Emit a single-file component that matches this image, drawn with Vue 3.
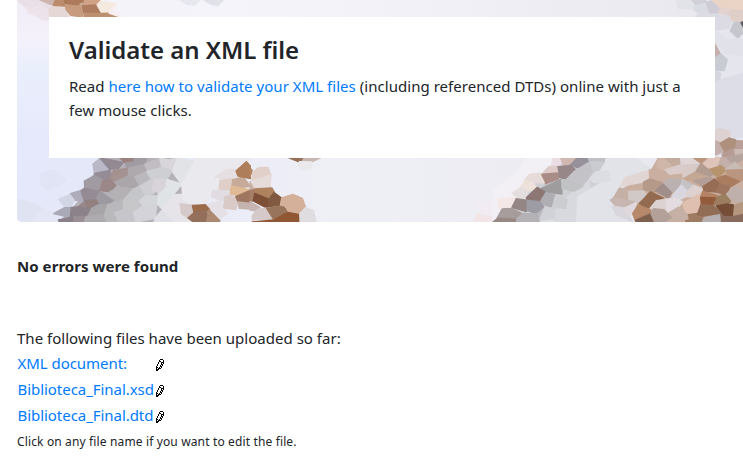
<script setup>
const files = ['XML document:', 'Biblioteca_Final.xsd', 'Biblioteca_Final.dtd']

// Mosaic tiles of the banner, grouped by the area they cover. Each area is drawn at a third of its tile units.
const areas = [
  { x: 0, y: 0, tiles: [
    ['#e9e0e7', '51,0 120,0 148,8 158,22 145,32 120,17 98,26 80,24'],
    ['#ede3eb', '98,26 120,17 147,34 147,60 125,58 110,48 84,38 80,24'],
    ['#e5d7d5', '147,28 158,18 198,26 206,51 150,51'],
    ['#cdb5ad', '120,0 166,0 164,15 148,12'],
    ['#bb8b6c', '166,0 194,0 198,19 160,16'],
    ['#c69b7e', '194,10 240,12 251,25 246,51 212,46 198,28'],
    ['#ad7a5c', '194,0 254,0 253,9 228,14 194,10'],
    ['#c9aa92', '240,12 253,9 257,18 248,24'],
    ['#ae7d61', '247,17 290,10 306,41 252,40'],
    ['#d0a287', '253,0 300,0 292,11 255,13'],
    ['#f5eae0', '302,4 348,10 327,40 306,41 291,14'],
    ['#bd906f', '252,40 306,40 340,39 360,51 252,51'],
    ['#f8eff2', '340,20 362,51 338,43 327,39'],
    ['#e7e8ef', '540,0 600,0 584,15 560,13'],
    ['#e1e2e9', '610,0 670,0 653,17 632,12']
  ]},
  { x: 372, y: 0, tiles: [
    ['#e2e3e9', '914,0 960,0 968,15 965,27 918,24'],
    ['#d2cfd8', '960,0 1001,0 1002,9 974,18'],
    ['#dadce3', '968,18 1003,10 1008,37 980,41 966,29'],
    ['#dcdce2', '980,41 1008,37 1029,42 1029,51 970,51'],
    ['#cecbd4', '1002,7 1026,0 1046,22 1038,40 1013,38'],
    ['#ead4c6', '1020,0 1113,0 1113,32 1075,28 1044,22'],
    ['#e4d2ce', '1046,22 1077,28 1069,45 1040,38'],
    ['#dfcfc8', '1077,30 1113,33 1113,64 1077,65 1069,45'],
    ['#dcdbe4', '1029,42 1069,47 1080,66 1068,86 1029,90'],
    ['#c5c7cd', '1075,92 1086,68 1105,67 1113,79 1113,99 1097,114'],
    ['#67636c', '1107,68 1113,65 1113,80']
  ]},
  { x: 703, y: 0, tiles: [
    ['#e0e1e9', '36,92 70,120 120,115 120,165 70,163 36,130'],
    ['#c5b1ad', '36,132 53,164 36,171'],
    ['#c9cbd3', '36,174 54,162 73,179 64,211 36,212'],
    ['#d5d6de', '36,212 52,219 50,247 36,252'],
    ['#dcdde6', '36,252 50,240 120,220 120,410 90,415 82,393 36,385'],
    ['#ddd1d2', '36,390 53,387 82,393 80,412 52,428 36,424'],
    ['#c4afac', '36,422 51,428 64,454 36,466'],
    ['#b99f98', '98,422 120,423 120,450 93,457 95,440'],
    ['#b69c94', '65,454 93,441 105,471 65,479 57,465'],
    ['#cbbab6', '95,450 120,448 120,480 100,475'],
    ['#ae907d', '51,430 78,414 98,420 95,440 65,454']
  ]},
  { x: 0, y: 140, tiles: [
    ['#e0e4f5', '122,102 160,90 196,121 180,137 138,148 124,130'],
    ['#dfe3f2', '51,177 95,190 131,206 121,226 96,246 64,246 51,240'],
    ['#e4e6f5', '131,206 176,220 176,246 96,246'],
    ['#b5b0b8', '299,55 520,54 580,100 500,246 180,246 240,180 284,100'],
    ['#bab7c6', '300,55 329,88 283,100 279,72'],
    ['#928993', '300,54 370,67 355,85 329,88'],
    ['#9c8180', '360,54 406,54 404,67 375,69'],
    ['#a09ca1', '375,69 405,66 401,54 440,54 434,75 382,86'],
    ['#ada9ac', '382,86 435,72 440,94 404,110 380,109'],
    ['#c1bdc2', '434,73 479,54 486,81 445,95'],
    ['#d8d6da', '479,54 507,60 533,54 516,93 486,82'],
    ['#e2e3e6', '533,54 590,66 583,105 545,134 516,93'],
    ['#958c96', '284,100 330,91 340,122 298,121'],
    ['#a49190', '340,91 382,85 380,112 345,123 332,119'],
    ['#aaa6aa', '382,109 404,112 420,138 370,145 346,125'],
    ['#bab8bc', '404,110 440,95 454,118 420,138'],
    ['#cecfd2', '440,94 486,82 516,93 500,120 454,118'],
    ['#a09ba2', '253,123 283,107 309,120 299,154 254,145'],
    ['#9b8688', '309,121 333,120 348,136 330,155 299,152'],
    ['#b4b1b4', '330,154 370,142 399,148 382,179 349,185'],
    ['#c5c6ca', '400,147 419,138 437,166 418,185 372,179'],
    ['#cfcfd3', '420,138 454,118 469,146 462,160 437,166'],
    ['#e1e4e6', '500,118 545,132 521,164 477,160 495,138'],
    ['#d8d3da', '462,120 493,117 495,139 477,159 457,149'],
    ['#aeacbb', '211,161 243,151 253,184 222,181'],
    ['#958b94', '253,145 298,154 287,180 253,183 243,152'],
    ['#9d9aa1', '287,178 300,155 340,182 321,195 296,193'],
    ['#d2d5e4', '176,178 210,164 223,181 213,200 190,195'],
    ['#95878a', '233,202 255,184 267,207'],
    ['#938180', '255,183 288,179 296,194 267,208'],
    ['#a8a5a9', '296,194 323,195 312,224 261,230 270,208'],
    ['#b9b8bc', '323,194 370,180 370,209 342,218'],
    ['#c7c7ca', '370,180 418,184 425,199 400,218 371,209'],
    ['#d3d5d8', '418,183 437,166 474,168 473,192 433,201'],
    ['#e0e3e6', '475,161 521,165 520,205 487,208 473,193'],
    ['#aaa9b7', '161,221 195,202 214,203 211,233'],
    ['#8c8289', '214,202 233,201 270,207 258,230 211,231'],
    ['#89818a', '175,240 222,230 222,246 178,246'],
    ['#9a8f94', '222,230 258,231 253,246 222,246'],
    ['#adabaf', '258,230 313,224 321,246 253,246'],
    ['#b9b8bb', '313,224 323,196 343,218 357,246 321,246'],
    ['#c6c6ca', '343,218 370,210 400,219 408,246 357,246'],
    ['#d4d3d9', '400,218 425,200 470,194 466,235 408,246'],
    ['#dfdfe6', '466,234 488,208 520,205 530,246 462,246'],
    ['#e6e4e9', '488,208 521,165 577,160 600,198 565,246 525,246'],
    ['#e9e9ee', '590,54 750,54 720,140 650,160 600,200 550,180 545,134'],
    ['#d5cac9', '540,191 577,196 580,227 564,234 545,221'],
    ['#9b6b4c', '577,196 621,194 630,207 609,222 582,218'],
    ['#94705c', '580,220 620,210 625,246 580,246 564,234'],
    ['#ad8972', '627,209 660,242 655,246 620,246'],
    ['#e5e0e5', '620,193 660,183 682,222 659,236'],
    ['#e6dfe2', '646,111 680,88 709,88 710,116 686,122'],
    ['#e0cfc8', '660,121 696,117 692,151 657,149'],
    ['#c7aa99', '698,119 730,111 751,139 720,143 696,137'],
    ['#e0b997', '695,138 751,150 714,167 690,162'],
    ['#e1dce2', '638,151 683,153 683,164 665,183 634,171'],
    ['#d9cac8', '674,171 692,164 714,184 707,209 671,204'],
    ['#9e765f', '707,170 751,151 751,189 714,184'],
    ['#c5b3ad', '714,186 751,190 751,207 718,205'],
    ['#ae7d5a', '708,93 739,65 751,78 751,116 714,108']
  ]},
  { x: 250, y: 140, tiles: [
    ['#977158', '117,54 162,54 158,61 145,65'],
    ['#c8b7b2', '162,54 211,54 185,66 158,62'],
    ['#eaeaed', '148,65 185,66 185,82 165,91 145,81'],
    ['#b58564', '0,82 8,95 0,107'],
    ['#e1d0c9', '8,96 27,83 54,82 63,107 6,123'],
    ['#e5dbd8', '6,123 63,105 60,145 10,148'],
    ['#c8b0a6', '0,125 12,149 0,151'],
    ['#a67f67', '0,151 14,149 14,180 0,185'],
    ['#ae815f', '14,147 66,144 73,156 54,174 14,160'],
    ['#7e4f37', '14,160 56,177 52,205 10,183'],
    ['#805940', '56,178 72,158 95,174 91,196 55,200'],
    ['#c6b5b3', '0,185 30,202 20,213 0,210'],
    ['#d5c9ca', '20,210 49,204 71,238 7,240 7,228'],
    ['#97745b', '50,205 100,197 114,217 72,240'],
    ['#d4b09b', '95,174 129,163 157,175 167,203 147,223 115,216 107,198 91,195'],
    ['#915735', '72,240 113,217 145,223 151,246 7,246'],
    ['#e0dde1', '150,220 166,203 190,211 198,246 150,246'],
    ['#f2ebf3', '678,189 735,181 750,194 750,216 730,225 690,215'],
    ['#f2e5e8', '670,246 682,222 722,230 736,246'],
    ['#938b93', '740,230 750,215 750,246 736,246']
  ]},
  { x: 493, y: 140, tiles: [
    ['#f2eff5', '0,150 70,100 100,54 180,54 185,80 100,125 70,200 0,246'],
    ['#cfd0d5', '200,54 335,54 390,90 290,170 260,210 220,246 12,246 110,150'],
    ['#dddfe4', '185,204 260,190 285,246 139,246 184,236'],
    ['#d8d9df', '222,170 290,120 290,246 185,246 184,205 219,205'],
    ['#e2e3e9', '330,54 430,54 500,110 400,200 420,246 250,246 255,170 330,125 352,121 345,92 317,93 333,67'],
    ['#e9dde3', '179,54 207,54 200,78 177,77'],
    ['#d2b6b0', '203,54 251,54 241,72 212,75'],
    ['#97919b', '233,75 252,54 286,54 289,65 264,88'],
    ['#bec0c4', '286,54 335,54 333,66 290,65'],
    ['#c9cbd0', '290,65 333,67 317,93 298,96'],
    ['#978788', '194,80 233,76 249,91 218,118 198,111'],
    ['#dccbc8', '149,100 168,79 190,80 194,99'],
    ['#a88c85', '142,103 193,99 197,117 157,132'],
    ['#e6dbd8', '96,118 110,103 140,99 154,129 115,126'],
    ['#ede1da', '82,143 97,120 117,128 132,143 106,154'],
    ['#c4c3c7', '245,93 289,66 298,98 266,139 221,118'],
    ['#9f9c9d', '145,145 206,117 207,162 157,156'],
    ['#c1c2c4', '206,119 222,119 269,140 242,154 207,145'],
    ['#e4dedf', '58,159 83,143 105,155 95,178 70,171'],
    ['#8d7774', '100,173 133,142 157,157 142,188 103,180'],
    ['#afafb3', '141,187 159,157 187,166 174,202'],
    ['#cccdd1', '187,168 222,179 219,205 179,202'],
    ['#f3e8e6', '14,180 70,171 60,201 17,204'],
    ['#958686', '57,202 70,176 104,181 100,215'],
    ['#9d9ba4', '103,181 141,185 154,202 132,222 102,211'],
    ['#b8b8bd', '132,223 156,202 139,240'],
    ['#d1d2d7', '139,239 156,202 185,205 184,236'],
    ['#a69c9b', '12,235 27,207 57,205 90,223 68,239'],
    ['#b4b2b5', '68,239 89,221 132,221 139,246 66,246'],
    ['#988883', '0,246 14,235 68,238 66,246'],
    ['#dcdce3', '290,117 309,95 345,92 352,121 304,128'],
    ['#c9afa0', '496,54 750,54 750,246 430,246 420,210 362,190 385,150 470,100'],
    ['#cfb6a8', '491,87 496,61 504,54 531,54 540,75 507,90'],
    ['#c3ab9e', '516,54 559,54 561,76 540,76'],
    ['#dfd6d8', '563,54 602,54 622,70 600,77 565,75'],
    ['#bd957e', '602,54 640,54 624,70'],
    ['#dfc5b9', '628,75 647,56 681,54 692,65 661,89'],
    ['#c4afa9', '685,54 703,54 722,77 696,88 676,78'],
    ['#b5a49e', '703,54 750,42 750,57 722,75'],
    ['#e1d6d3', '382,139 398,112 469,91 466,115 451,126'],
    ['#caaea0', '469,90 490,87 530,98 510,127 470,117'],
    ['#d9ccca', '516,89 563,75 574,76 570,98 530,103'],
    ['#d8cac6', '572,76 622,72 603,98 570,113 569,98'],
    ['#b29b91', '606,99 624,70 660,102 649,111'],
    ['#b6946e', '650,88 684,77 700,89 674,113'],
    ['#c8bab5', '697,88 726,67 750,89 720,92'],
    ['#c09c83', '699,91 750,90 750,120 703,109'],
    ['#c5a893', '567,119 605,97 649,112 614,122'],
    ['#b49f98', '601,122 649,112 663,117 630,139'],
    ['#b59a8a', '451,127 469,117 510,129 488,155 452,150'],
    ['#bbb1b0', '510,130 527,116 567,121 563,140 536,157'],
    ['#c6c3c7', '563,140 567,118 601,137 581,154'],
    ['#a08e8a', '488,153 510,132 536,158 526,174'],
    ['#c5b0a6', '361,175 379,144 407,153 407,181'],
    ['#d1c9c7', '407,154 453,153 459,166 445,187 408,181'],
    ['#936b50', '445,184 472,155 511,174 483,185 469,207 438,191'],
    ['#d9d6df', '537,168 565,135 582,154 577,171 554,181'],
    ['#ded2d1', '582,155 602,136 628,146 623,172 580,170'],
    ['#976d55', '630,140 665,117 684,132 681,157 633,153'],
    ['#aa7d61', '672,115 696,106 740,124 715,139 684,132'],
    ['#ba957f', '700,91 750,90 750,123 713,109'],
    ['#9e7660', '681,133 711,141 698,167 670,155'],
    ['#c0b0ab', '699,164 724,139 750,149 750,190 716,180'],
    ['#c8b7b1', '352,180 361,174 408,182 429,186 394,204 366,196'],
    ['#d9d5dc', '357,199 394,203 419,245 370,224'],
    ['#e0d8dc', '394,204 431,187 420,224 402,224'],
    ['#b5896a', '419,221 435,196 471,208 474,221 427,242'],
    ['#7e604f', '428,241 474,221 483,246 429,246'],
    ['#dcd2d2', '471,205 490,182 519,178 522,204 512,210'],
    ['#e3dbe0', '519,178 543,173 568,185 554,206 522,222'],
    ['#dfbfaf', '568,190 620,162 624,191 610,224 582,225'],
    ['#9f7b62', '580,225 613,220 634,229 629,246 578,246'],
    ['#c5b0a6', '522,222 557,201 582,224 585,237 550,240 535,232'],
    ['#b3a199', '474,221 482,206 512,209 535,232 516,246 485,246'],
    ['#b38264', '629,154 672,166 664,177 623,171'],
    ['#935b3b', '623,172 672,174 662,194 625,193'],
    ['#9a7e5e', '663,194 673,170 697,164 713,184 701,195'],
    ['#926d56', '624,193 661,197 690,225 651,231 613,224'],
    ['#b6b0b2', '634,232 680,224 688,246 628,246'],
    ['#886b5c', '684,226 750,217 750,246 686,246'],
    ['#b59780', '720,198 750,187 750,219 719,226'],
    ['#764d37', '670,198 704,192 721,195 718,226 693,225']
  ]}
]
</script>

<template>
  <main class="page">
    <section class="banner">
      <svg class="mosaic" viewBox="17 0 726 222" preserveAspectRatio="none" aria-hidden="true">
        <defs>
          <linearGradient id="base" x1="0" x2="1" y1="0" y2="0">
            <stop offset="0" stop-color="#e4e8fa" />
            <stop offset=".15" stop-color="#e4e8f8" />
            <stop offset=".42" stop-color="#efeff6" />
            <stop offset=".75" stop-color="#ececf2" />
            <stop offset="1" stop-color="#e4e5ed" />
          </linearGradient>
          <linearGradient id="top" x1="0" x2="1" y1="0" y2="0">
            <stop offset="0" stop-color="#f5f3fb" />
            <stop offset=".3" stop-color="#f4f4fa" />
            <stop offset=".6" stop-color="#f0f0f6" />
            <stop offset="1" stop-color="#e7e7ed" />
          </linearGradient>
          <linearGradient id="edge" x1="0" x2="0" y1="0" y2="1">
            <stop offset="0" stop-color="#f0edf6" />
            <stop offset=".2" stop-color="#f5f1fb" />
            <stop offset=".35" stop-color="#eaeffc" />
            <stop offset=".7" stop-color="#e6e9fb" />
            <stop offset="1" stop-color="#e4e8fa" />
          </linearGradient>
        </defs>
        <rect x="17" width="726" height="222" fill="url(#base)" />
        <rect x="17" width="726" height="20" fill="url(#top)" />
        <rect x="17" width="32" height="190" fill="url(#edge)" />
        <g v-for="(a, i) in areas" :key="i" :transform="`translate(${a.x} ${a.y}) scale(.333333)`">
          <polygon v-for="(t, j) in a.tiles" :key="j" :points="t[1]" :fill="t[0]" :stroke="t[0]" stroke-width="4" stroke-linejoin="round" />
        </g>
      </svg>
      <div class="card">
        <h1>Validate an XML file</h1>
        <p>Read <a>here how to validate your XML files</a> (including referenced DTDs) online with just a<br>few mouse clicks.</p>
      </div>
    </section>

    <p class="status">No errors were found</p>
    <p class="intro">The following files have been uploaded so far:</p>
    <ul class="files">
      <li v-for="f in files" :key="f">
        <a class="name">{{ f }}</a>
        <svg class="pencil" viewBox="0 0 8 12" shape-rendering="crispEdges" aria-hidden="true">
          <path d="M4 0h3v1h-3zM3 1h1v2h-1zM7 1h1v4h-1zM4 2h1v1h-1zM2 3h1v2h-1zM5 3h2v1h-2zM5 4h1v2h-1zM1 5h1v2h-1zM6 5h1v2h-1zM4 6h1v2h-1zM0 7h1v5h-1zM5 7h1v2h-1zM1 8h1v1h-1zM3 8h1v2h-1zM4 9h1v1h-1zM2 9h1v2h-1zM1 10h1v2h-1z" />
        </svg>
      </li>
    </ul>
    <p class="hint">Click on any file name if you want to edit the file.</p>
  </main>
</template>

<style>
body { background: #fff; overflow: hidden; }
</style>

<style scoped>
.page {
  padding-left: 17px;
  height: 467px;
  box-sizing: border-box;
  color: #212529;
  font: 15px/24px "Noto Sans", "Open Sans", sans-serif;
}
.banner {
  display: grid;
  height: 222px;
  border-bottom-left-radius: 5px;
  overflow: hidden;
}
.mosaic { grid-area: 1 / 1; width: 726px; height: 222px; display: block; }
.card {
  grid-area: 1 / 1;
  z-index: 1;
  box-sizing: border-box;
  width: 666px;
  height: 141px;
  margin: 17px 0 0 32px;
  padding: 18px 20px;
  background: #fff;
  white-space: nowrap;
  letter-spacing: .035px;
}
h1, p, ul { margin: 0; padding: 0; }
h1 {
  font: 600 24px/29px "Noto Sans", "Open Sans", sans-serif;
  letter-spacing: -.02px;
  margin-bottom: 10px;
}
a { color: #007bff; text-decoration: none; }
.status { margin-top: 32px; font-weight: 700; letter-spacing: .05px; }
.intro { margin-top: 48px; letter-spacing: .02px; }
.files { list-style: none; padding: 1px 0 0; }
.files li { display: flex; height: 26px; line-height: 24px; }
.name { width: 139px; padding-left: .5px; box-sizing: border-box; white-space: nowrap; letter-spacing: -.05px; }
.pencil { width: 8px; height: 12px; margin-top: 8px; }
.hint { font-size: 12px; line-height: 20px; margin-top: 3px; letter-spacing: .14px; }
</style>
